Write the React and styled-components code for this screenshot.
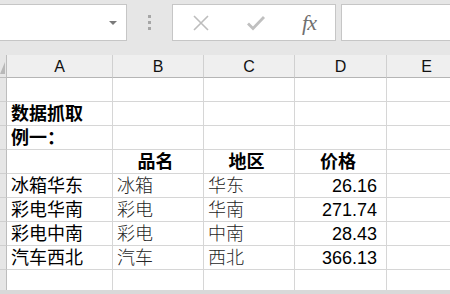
import React from 'react'
import styled, { createGlobalStyle } from 'styled-components'

const GlobalStyle = createGlobalStyle`
	html, body {
		margin: 0;
		padding: 0;
		background: #e6e6e6;
	}
	* {
		box-sizing: border-box;
	}
`

const cjk = `"Liberation Sans", "Noto Sans CJK SC", sans-serif`

const Window = styled.div`
	width: 450px;
	height: 294px;
	overflow: hidden;
	display: flex;
	flex-direction: column;
	background: #e6e6e6;
	font-family: ${cjk};
`

const Toolbar = styled.div`
	height: 55px;
	flex: none;
	display: flex;
	align-items: flex-start;
	padding-top: 4px;
`

const NameBox = styled.div`
	width: 127px;
	height: 37px;
	background: #fff;
	border: 1px solid #c6c6c6;
	border-left: none;
	display: flex;
	align-items: center;
	justify-content: flex-end;
	padding-right: 9px;
`

const Caret = styled.span`
	width: 0;
	height: 0;
	border-left: 4px solid transparent;
	border-right: 4px solid transparent;
	border-top: 4px solid #7a7a7a;
`

const Grip = styled.div`
	width: 45px;
	height: 37px;
	display: flex;
	flex-direction: column;
	align-items: center;
	justify-content: center;
	gap: 3px;

	& > span {
		width: 3px;
		height: 3px;
		background: #a6a6a6;
	}
`

const FormulaButtons = styled.div`
	width: 164px;
	height: 37px;
	background: #fff;
	border: 1px solid #c6c6c6;
	display: flex;
	align-items: center;
`

const ToolButton = styled.div`
	width: ${p => p.w}px;
	height: 100%;
	display: flex;
	align-items: center;
	justify-content: center;
`

const Fx = styled.span`
	font-family: "Liberation Serif", serif;
	font-style: italic;
	font-size: 22px;
	color: #707070;
	letter-spacing: -1px;
`

const FormulaInput = styled.div`
	flex: 1;
	height: 37px;
	margin-left: 5px;
	background: #fff;
	border: 1px solid #c6c6c6;
	border-right: none;
`

const Sheet = styled.div`
	flex: 1;
	display: grid;
	grid-template-columns: 7px 106px 91px 91px 92px 80px;
	grid-template-rows: 23px repeat(9, 24px);
	background: #fff;
	overflow: hidden;
`

const Corner = styled.div`
	background: #e6e6e6;
	border-right: 1px solid #bdbdbd;
	border-bottom: 1px solid #bdbdbd;
	position: relative;

	&::after {
		content: '';
		position: absolute;
		right: 1px;
		bottom: 3px;
		width: 0;
		height: 0;
		border-left: 5px solid transparent;
		border-bottom: 12px solid #b8b8b8;
	}
`

const ColHeader = styled.div`
	background: #efefef;
	border-right: 1px solid #d0d0d0;
	border-bottom: 1px solid #b5b5b5;
	display: flex;
	align-items: center;
	justify-content: center;
	font-family: "Liberation Sans", Arial, sans-serif;
	font-size: 16px;
	color: #111;
	padding-top: 2px;
`

const RowHeader = styled.div`
	background: #e6e6e6;
	border-right: 1px solid #bdbdbd;
	border-bottom: 1px solid #cfcfcf;
`

const Cell = styled.div`
	border-right: 1px solid #d6d6d6;
	border-bottom: 1px solid #d6d6d6;
	display: flex;
	align-items: center;
	justify-content: ${p =>
		p.align === 'right' ? 'flex-end' : p.align === 'center' ? 'center' : 'flex-start'};
	padding: 1px 9px 0 4px;
	white-space: nowrap;
	font-family: ${p => (p.num ? `"Liberation Sans", Arial, sans-serif` : cjk)};
	font-size: 18px;
	font-weight: ${p => (p.bold ? 700 : p.light ? 300 : 400)};
	color: ${p => (p.light ? '#262626' : '#000')};
	line-height: 1;
`

const BottomStrip = styled.div`
	height: 4px;
	flex: none;
	background: #d9d9d9;
`

const columns = ['A', 'B', 'C', 'D', 'E']

const rows = [
	[],
	[{ text: '数据抓取', bold: true }],
	[{ text: '例一：', bold: true }],
	[
		null,
		{ text: '品名', bold: true, align: 'center' },
		{ text: '地区', bold: true, align: 'center' },
		{ text: '价格', bold: true, align: 'center' }
	],
	[{ text: '冰箱华东' }, { text: '冰箱', light: true }, { text: '华东', light: true }, { text: '26.16', num: true, align: 'right' }],
	[{ text: '彩电华南' }, { text: '彩电', light: true }, { text: '华南', light: true }, { text: '271.74', num: true, align: 'right' }],
	[{ text: '彩电中南' }, { text: '彩电', light: true }, { text: '中南', light: true }, { text: '28.43', num: true, align: 'right' }],
	[{ text: '汽车西北' }, { text: '汽车', light: true }, { text: '西北', light: true }, { text: '366.13', num: true, align: 'right' }],
	[]
]

const CrossIcon = () => (
	<svg width="18" height="18" viewBox="0 0 18 18">
		<path d="M2 2 L16 16 M16 2 L2 16" stroke="#bdbdbd" strokeWidth="1.6" fill="none" />
	</svg>
)

const CheckIcon = () => (
	<svg width="20" height="16" viewBox="0 0 20 16">
		<path d="M2 8.5 L7 13.5 L18 2" stroke="#c0c0c0" strokeWidth="2.8" fill="none" />
	</svg>
)

export default function App() {
	return (
		<Window>
			<GlobalStyle />
			<Toolbar>
				<NameBox>
					<Caret />
				</NameBox>
				<Grip>
					<span />
					<span />
					<span />
				</Grip>
				<FormulaButtons>
					<ToolButton w={56}>
						<CrossIcon />
					</ToolButton>
					<ToolButton w={54}>
						<CheckIcon />
					</ToolButton>
					<ToolButton w={52}>
						<Fx>fx</Fx>
					</ToolButton>
				</FormulaButtons>
				<FormulaInput />
			</Toolbar>
			<Sheet>
				<Corner />
				{columns.map(c => (
					<ColHeader key={c}>{c}</ColHeader>
				))}
				{rows.map((row, r) => (
					<React.Fragment key={r}>
						<RowHeader />
						{columns.map((c, i) => {
							const cell = row[i]
							return cell ? (
								<Cell
									key={c}
									align={cell.align}
									bold={cell.bold}
									light={cell.light}
									num={cell.num}
								>
									{cell.text}
								</Cell>
							) : (
								<Cell key={c} />
							)
						})}
					</React.Fragment>
				))}
			</Sheet>
			<BottomStrip />
		</Window>
	)
}
